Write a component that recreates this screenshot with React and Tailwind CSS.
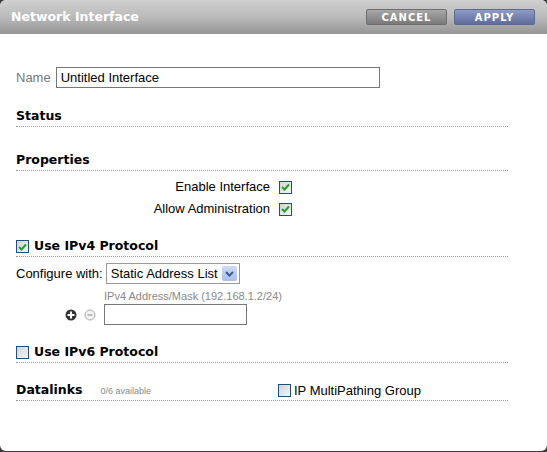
import React from 'react'

const font = { fontFamily: '"Liberation Sans", Arial, sans-serif' }
const heavy = { fontFamily: '"DejaVu Sans", Verdana, sans-serif' }

function Check({ checked }) {
  return (
    <span className="inline-flex h-[13px] w-[13px] shrink-0 items-center justify-center border border-[#1f4f7f] bg-gradient-to-br from-[#d4d4d4] to-[#f4f4f4]">
      {checked && (
        <svg width="9" height="8" viewBox="0 0 9 8">
          <path d="M1 4 L3.5 6.5 L8 1.5" fill="none" stroke="#21a321" strokeWidth="2" />
        </svg>
      )}
    </span>
  )
}

function Heading({ children, className = '' }) {
  return (
    <div className={`flex h-[22px] items-center border-b border-dotted border-[#999] pt-[2px] ${className}`}>
      {children}
    </div>
  )
}

export default function App() {
  return (
    <div className="h-[452px] w-[547px] overflow-hidden bg-[#3c3c3c]">
      <div className="h-[451px] overflow-hidden rounded-[6px] bg-white text-[13px] text-black" style={font}>
        <div className="flex h-[34px] items-center justify-between bg-gradient-to-b from-[#d0d0d0] via-[#bababa] to-[#969696] pl-[11px] pr-[12px]">
          <span className="text-[12.5px] font-bold text-white" style={heavy}>
            Network Interface
          </span>
          <div className="flex gap-[7px]">
            <button className="flex h-[16px] w-[81px] items-center justify-center rounded-[2px] border border-[#6d6d6d] bg-gradient-to-b from-[#a8a8a8] to-[#7a7a7a] text-[10px] font-bold tracking-[1px] text-white" style={heavy}>
              CANCEL
            </button>
            <button className="flex h-[16px] w-[81px] items-center justify-center rounded-[2px] border border-[#5d6890] bg-gradient-to-b from-[#8f9cc6] to-[#5f6c9c] text-[10px] font-bold tracking-[1px] text-white" style={heavy}>
              APPLY
            </button>
          </div>
        </div>

        <div className="pl-[16px] pr-[39px]">
          <div className="mt-[33px] flex h-[21px] items-center gap-[5px]">
            <span className="text-[#777]">Name</span>
            <div className="flex h-[21px] w-[324px] items-center border border-[#777] px-[4px]">Untitled Interface</div>
          </div>

          <Heading className="mt-[17px]">
            <span className="text-[12.5px] font-bold" style={heavy}>Status</span>
          </Heading>

          <Heading className="mt-[22px]">
            <span className="text-[12.5px] font-bold" style={heavy}>Properties</span>
          </Heading>

          <div className="mt-[5px] flex w-[276px] flex-col items-end">
            <div className="flex h-[22px] items-center gap-[9px]">
              <span>Enable Interface</span>
              <Check checked />
            </div>
            <div className="flex h-[22px] items-center gap-[9px]">
              <span>Allow Administration</span>
              <Check checked />
            </div>
          </div>

          <Heading className="mt-[15px] gap-[5px]">
            <Check checked />
            <span className="text-[12.5px] font-bold" style={heavy}>Use IPv4 Protocol</span>
          </Heading>

          <div className="mt-[6px] flex h-[21px] items-center gap-[3px]">
            <span>Configure with:</span>
            <div className="flex h-[21px] w-[134px] items-center justify-between border border-[#999] pl-[4px] pr-[2px]">
              <span>Static Address List</span>
              <span className="flex h-[15px] w-[15px] items-center justify-center rounded-[2px] bg-gradient-to-b from-[#cfdcf5] to-[#a8bde8]">
                <svg width="9" height="6" viewBox="0 0 9 6">
                  <path d="M1 1 L4.5 4.5 L8 1" fill="none" stroke="#3c5a99" strokeWidth="2" />
                </svg>
              </span>
            </div>
          </div>

          <div className="ml-[88px] mt-[6px] text-[11px] leading-[12px] text-[#888]">IPv4 Address/Mask (192.168.1.2/24)</div>
          <div className="mt-[2px] flex h-[21px] items-center">
            <div className="ml-[49px] flex items-center gap-[7px]">
              <svg width="12" height="12" viewBox="0 0 12 12">
                <circle cx="6" cy="6" r="5.5" fill="#333" />
                <path d="M6 2.5 V9.5 M2.5 6 H9.5" stroke="#fff" strokeWidth="2" />
              </svg>
              <svg width="12" height="12" viewBox="0 0 12 12">
                <circle cx="6" cy="6" r="5" fill="#f2f2f2" stroke="#aaa" />
                <path d="M3.5 6 H8.5" stroke="#aaa" strokeWidth="1.5" />
              </svg>
            </div>
            <div className="ml-[8px] h-[21px] w-[143px] border border-[#777]" />
          </div>

          <Heading className="mt-[16px] gap-[5px]">
            <Check />
            <span className="text-[12.5px] font-bold" style={heavy}>Use IPv6 Protocol</span>
          </Heading>

          <Heading className="mt-[16px]">
            <div className="flex w-[262px] items-baseline">
              <span className="text-[12.5px] font-bold" style={heavy}>Datalinks</span>
              <span className="ml-[18px] text-[9px] text-[#888]">0/6 available</span>
            </div>
            <span className="flex items-center gap-[3px]">
              <Check />
              <span>IP MultiPathing Group</span>
            </span>
          </Heading>
        </div>
      </div>
    </div>
  )
}
